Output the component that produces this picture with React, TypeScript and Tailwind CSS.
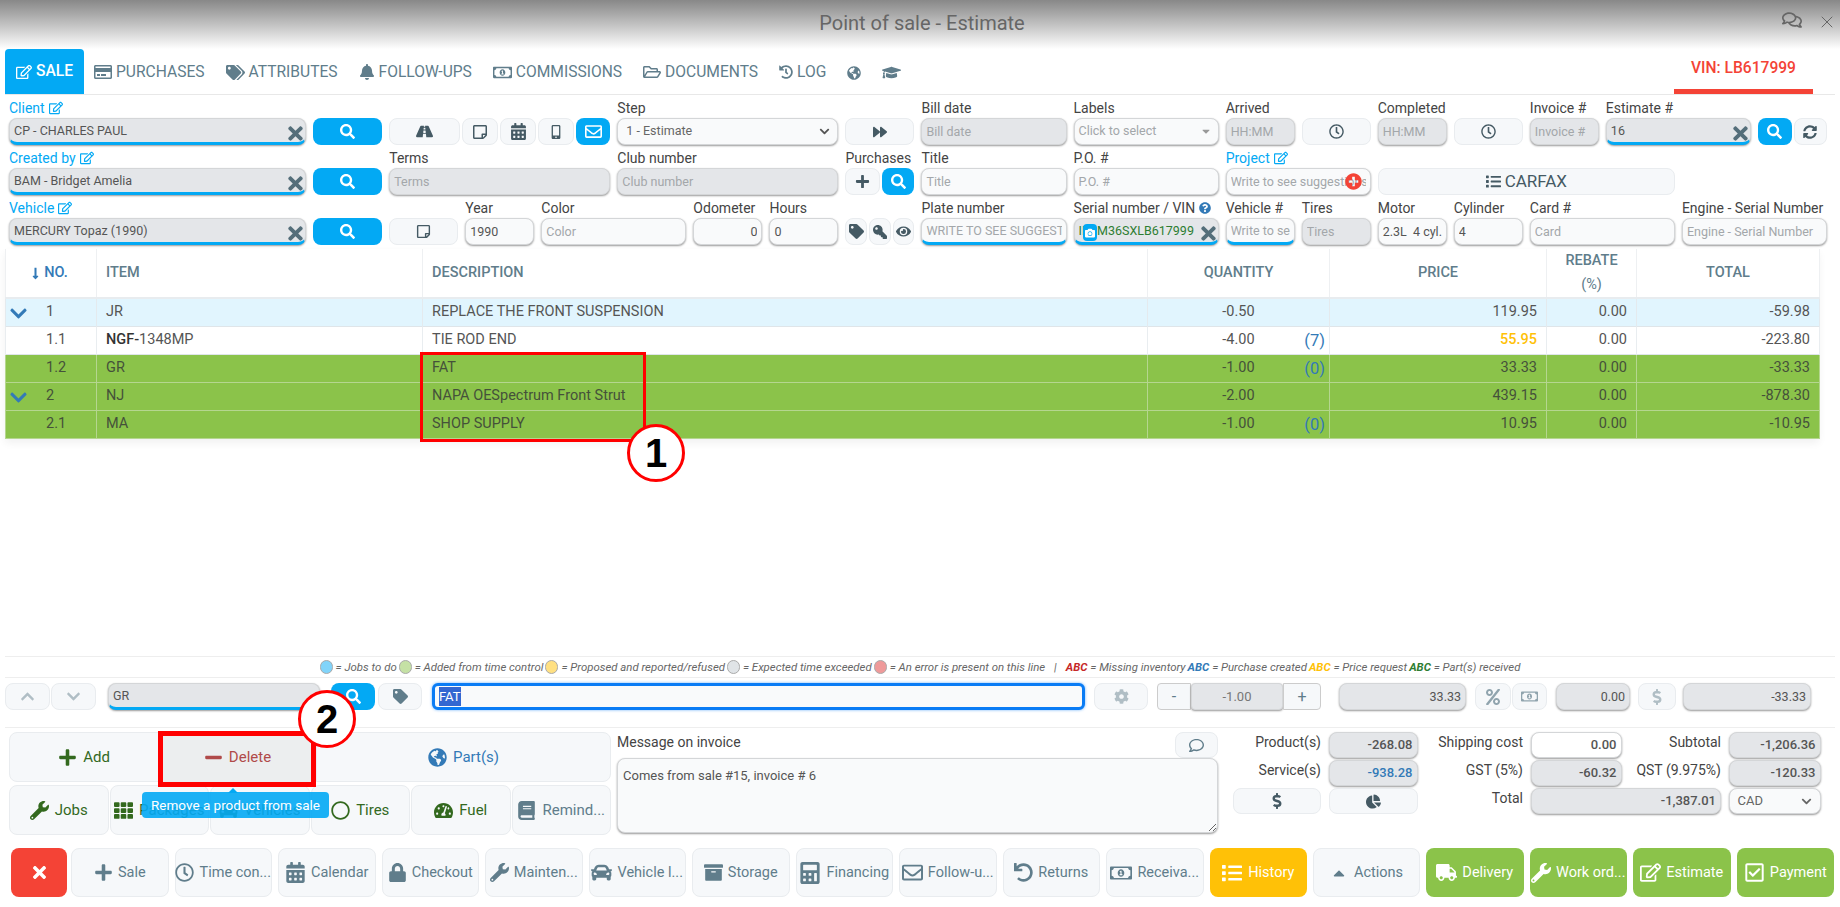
import type { ReactNode } from "react";
import {
  FaArchive, FaBell, FaBook, FaCalculator, FaCalendarAlt, FaCamera, FaCar, FaCaretUp, FaChartPie, FaChevronDown,
  FaChevronUp, FaCog, FaDollarSign, FaEye, FaForward, FaGlobeAmericas, FaGraduationCap, FaHistory,
  FaKey, FaList, FaLock, FaLongArrowAltDown, FaMinus, FaMobileAlt, FaPercent, FaPlus, FaPlusCircle, FaQuestionCircle,
  FaRegCheckSquare, FaRegCircle, FaRegClock, FaRegComment, FaRegComments, FaRegCreditCard, FaRegEdit, FaRegEnvelope,
  FaRegFolderOpen, FaRegMoneyBillAlt, FaRegStickyNote, FaRoad, FaSearch, FaSyncAlt, FaTachometerAlt, FaTag, FaTags,
  FaTh, FaTimes, FaTruck, FaUndo, FaWrench,
} from "react-icons/fa";
import { X } from "lucide-react";

const grayBtn = "flex items-center justify-center rounded-lg border border-[#e9ecef] bg-[#f6f8fa] text-[#455a64]";
const blueBtn = "flex items-center justify-center rounded-lg bg-[#03a9f4] text-white";

const Label = ({ children, link }: { children?: ReactNode; link?: boolean }) => (
  <div className={`flex h-[18px] items-center gap-1 whitespace-nowrap pb-[2px] text-[14px] ${link ? "text-[#03a9f4]" : "text-[#444]"}`}>
    {children}
    {link && <FaRegEdit className="text-[14px]" />}
  </div>
);

type InpProps = {
  value?: string;
  placeholder?: string;
  gray?: boolean;
  line?: boolean;
  clear?: boolean;
  right?: boolean;
  green?: boolean;
  className?: string;
};

const Inp = ({ value, placeholder, gray, line, clear, right, green, className = "h-[27px]" }: InpProps) => (
  <div className={`relative w-full ${className}`}>
    <input
      readOnly
      value={value ?? ""}
      placeholder={placeholder}
      className={`h-full w-full rounded-lg border border-[#d4d6d8] px-[4px] text-[12.5px] shadow-[0_1px_2px_rgba(0,0,0,0.4)] outline-none placeholder:text-[#a3a7aa] ${
        gray ? "bg-[#e4e6e9]" : "bg-[#f9fafb]"
      } ${line ? "border-b-[3px] border-b-[#03a9f4]" : ""} ${right ? "text-right" : ""} ${green ? "text-[#2e7d32]" : "text-[#555]"}`}
    />
    {clear && <FaTimes className="absolute right-0 top-[5px] text-[21px] text-[#546e7a]" />}
  </div>
);

const Field = ({ span, label, link, children }: { span: string; label?: ReactNode; link?: boolean; children: ReactNode }) => (
  <div className={`${span} min-w-0`}>
    <Label link={link}>{label}</Label>
    <div className="flex h-[27px] gap-[2px]">{children}</div>
  </div>
);

const SearchBtn = ({ className = "w-full" }: { className?: string }) => (
  <button className={`${blueBtn} h-[27px] text-[15px] ${className}`}>
    <FaSearch />
  </button>
);

const Select = ({ value, placeholder }: { value?: string; placeholder?: string }) => (
  <div className="flex h-[27px] w-full items-center justify-between rounded-lg border border-[#d4d6d8] bg-[#f9fafb] px-[4px] text-[12.5px] shadow-[0_1px_2px_rgba(0,0,0,0.4)]">
    <span className={value ? "pl-[4px] text-[#666]" : "text-[#a3a7aa]"}>{value ?? placeholder}</span>
    {value ? <FaChevronDown className="mr-[3px] text-[11px] text-[#555]" /> : <FaCaretUp className="mr-[2px] rotate-180 text-[12px] text-[#999]" />}
  </div>
);

const tabs = [
  { icon: <FaRegCreditCard className="text-[18px]" />, label: "PURCHASES" },
  { icon: <FaTags className="text-[19px]" />, label: "ATTRIBUTES" },
  { icon: <FaBell className="text-[16px]" />, label: "FOLLOW-UPS" },
  { icon: <FaRegMoneyBillAlt className="text-[19px]" />, label: "COMMISSIONS" },
  { icon: <FaRegFolderOpen className="text-[18px]" />, label: "DOCUMENTS" },
  { icon: <FaHistory className="text-[14px]" />, label: "LOG" },
  { icon: <FaGlobeAmericas className="text-[14px]" />, label: "" },
  { icon: <FaGraduationCap className="text-[19px]" />, label: "" },
];

const rows = [
  { no: "1", item: "JR", desc: "REPLACE THE FRONT SUSPENSION", qty: "-0.50", stock: "", price: "119.95", total: "-59.98", tone: "blue", arrow: true },
  { no: "1.1", item: "1348MP", bold: "NGF-", desc: "TIE ROD END", qty: "-4.00", stock: "(7)", price: "55.95", total: "-223.80", tone: "white", yellow: true },
  { no: "1.2", item: "GR", desc: "FAT", qty: "-1.00", stock: "(0)", price: "33.33", total: "-33.33", tone: "green" },
  { no: "2", item: "NJ", desc: "NAPA OESpectrum Front Strut", qty: "-2.00", stock: "", price: "439.15", total: "-878.30", tone: "green", arrow: true },
  { no: "2.1", item: "MA", desc: "SHOP SUPPLY", qty: "-1.00", stock: "(0)", price: "10.95", total: "-10.95", tone: "green" },
];

const Legend = ({ color, text }: { color: string; text: string }) => (
  <span className="flex items-center gap-[3px]">
    <span className={`h-[14px] w-[13px] rounded-full border border-[#aaa] ${color}`} />
    <span>= {text}</span>
  </span>
);

const SmallBtn = ({ icon, label, color, className }: { icon: ReactNode; label: string; color: string; className: string }) => (
  <button className={`${grayBtn} h-[50px] gap-[6px] text-[15px] ${color} ${className}`}>
    <span className="text-[19px]">{icon}</span>
    {label}
  </button>
);

const bottom = [
  { icon: <FaPlus />, label: "Sale" },
  { icon: <FaRegClock />, label: "Time con..." },
  { icon: <FaCalendarAlt className="text-[21px]" />, label: "Calendar" },
  { icon: <FaLock />, label: "Checkout" },
  { icon: <FaWrench />, label: "Mainten..." },
  { icon: <FaCar className="text-[21px]" />, label: "Vehicle l..." },
  { icon: <FaArchive />, label: "Storage" },
  { icon: <FaCalculator className="text-[22px]" />, label: "Financing" },
  { icon: <FaRegEnvelope className="text-[21px]" />, label: "Follow-u..." },
  { icon: <FaUndo />, label: "Returns" },
  { icon: <FaRegMoneyBillAlt className="text-[22px]" />, label: "Receiva..." },
];

const greenBottom = [
  { icon: <FaTruck className="text-[21px]" />, label: "Delivery" },
  { icon: <FaWrench className="text-[20px]" />, label: "Work ord..." },
  { icon: <FaRegEdit className="text-[21px]" />, label: "Estimate" },
  { icon: <FaRegCheckSquare className="text-[21px]" />, label: "Payment" },
];

const TotalLabel = ({ children }: { children: ReactNode }) => (
  <div className="flex h-[26px] items-start justify-end whitespace-nowrap text-[14px] text-[#444]">{children}</div>
);

const TotalVal = ({ value, blue, light, span }: { value: string; blue?: boolean; light?: boolean; span?: string }) => (
  <div
    className={`flex h-[26px] items-center justify-end rounded-lg border border-[#d4d6d8] px-[4px] text-[13px] font-medium shadow-[0_1px_2px_rgba(0,0,0,0.4)] ${
      light ? "bg-white" : "bg-[#e4e6e9]"
    } ${blue ? "text-[#337ab7]" : "text-[#555]"} ${span ?? ""}`}
  >
    {value}
  </div>
);

export default function App() {
  return (
    <div className="relative flex h-[907px] w-[1840px] flex-col overflow-hidden bg-white font-[Roboto,sans-serif]">
      {/* title bar */}
      <div className="relative flex h-[49px] shrink-0 items-center justify-center bg-gradient-to-b from-[#888] to-white pb-[4px] pl-[4px] text-[20px] text-[#666]">
        Point of sale - Estimate
        <FaRegComments className="absolute right-[38px] top-[10px] text-[20px] text-[#666]" />
        <X className="absolute right-[3px] top-[12px] h-[20px] w-[20px] text-[#666]" strokeWidth={1.2} />
      </div>

      {/* tabs */}
      <div className="ml-[5px] mr-[5px] flex h-[46px] shrink-0 items-stretch justify-between border-b border-[#e8e8e8] text-[15.6px] text-[#607d8b]">
        <div className="flex items-stretch">
          <div className="mr-[10px] flex w-[79px] items-center justify-center gap-[4px] rounded-t bg-[#03a9f4] pt-[1px] font-medium text-white">
            <FaRegEdit className="text-[16px]" />
            SALE
          </div>
          <div className="flex items-center gap-[21px] pt-[2px]">
            {tabs.map((t, i) => (
              <span key={i} className="flex items-center gap-[4px] whitespace-nowrap">
                {t.icon}
                {t.label}
              </span>
            ))}
          </div>
        </div>
        <div className="mr-[22px] flex w-[139px] items-center justify-center border-b-[5px] border-[#f44336] font-medium text-[#f44336]">
          VIN: LB617999
        </div>
      </div>

      {/* form */}
      <div className="mt-[5px] grid shrink-0 grid-cols-24 gap-x-[7px] gap-y-[5px] pl-[9px] pr-[13px]">
        <Field span="col-span-4" label="Client" link><Inp value="CP - CHARLES PAUL" gray line clear /></Field>
        <Field span="col-span-1"><SearchBtn /></Field>
        <Field span="col-span-3">
          <button className={`${grayBtn} w-[71px] shrink-0 text-[17px]`}><FaRoad /></button>
          <button className={`${grayBtn} flex-1`}><FaRegStickyNote className="text-[16px]" /></button>
          <button className={`${grayBtn} flex-1`}><FaCalendarAlt className="text-[17px]" /></button>
          <button className={`${grayBtn} flex-1`}><FaMobileAlt className="text-[14px]" /></button>
          <button className={`${blueBtn} flex-1`}><FaRegEnvelope className="text-[17px]" /></button>
        </Field>
        <Field span="col-span-3" label="Step"><Select value="1 - Estimate" /></Field>
        <Field span="col-span-1"><button className={`${grayBtn} w-full text-[14px]`}><FaForward /></button></Field>
        <Field span="col-span-2" label="Bill date"><Inp placeholder="Bill date" gray /></Field>
        <Field span="col-span-2" label="Labels"><Select placeholder="Click to select" /></Field>
        <Field span="col-span-1" label="Arrived"><Inp placeholder="HH:MM" gray /></Field>
        <Field span="col-span-1"><button className={`${grayBtn} w-full text-[15px]`}><FaRegClock /></button></Field>
        <Field span="col-span-1" label="Completed"><Inp placeholder="HH:MM" gray /></Field>
        <Field span="col-span-1"><button className={`${grayBtn} w-full text-[15px]`}><FaRegClock /></button></Field>
        <Field span="col-span-1" label="Invoice #"><Inp placeholder="Invoice #" gray /></Field>
        <Field span="col-span-2" label="Estimate #"><Inp value="16" gray line clear /></Field>
        <Field span="col-span-1">
          <SearchBtn className="w-[34px] shrink-0" />
          <button className={`${grayBtn} flex-1 text-[14px]`}><FaSyncAlt /></button>
        </Field>

        <Field span="col-span-4" label="Created by" link><Inp value="BAM - Bridget Amelia" gray line clear /></Field>
        <Field span="col-span-1"><SearchBtn /></Field>
        <Field span="col-span-3" label="Terms"><Inp placeholder="Terms" gray /></Field>
        <Field span="col-span-3" label="Club number"><Inp placeholder="Club number" gray /></Field>
        <Field span="col-span-1" label="Purchases">
          <button className={`${grayBtn} h-[27px] flex-1 text-[15px]`}><FaPlus /></button>
          <SearchBtn className="flex-1" />
        </Field>
        <Field span="col-span-2" label="Title"><Inp placeholder="Title" /></Field>
        <Field span="col-span-2" label="P.O. #"><Inp placeholder="P.O. #" /></Field>
        <Field span="col-span-2" label="Project" link>
          <div className="relative w-full">
            <Inp placeholder="Write to see suggestions" />
            <span className="absolute right-[9px] top-[5px] text-[17px] text-[#f44336]"><FaPlusCircle /></span>
          </div>
        </Field>
        <Field span="col-span-4">
          <button className={`${grayBtn} w-full gap-[4px] text-[17px]`}><FaList className="text-[15px]" />CARFAX</button>
        </Field>
        <div className="col-span-2" />

        <Field span="col-span-4" label="Vehicle" link><Inp value="MERCURY Topaz (1990)" gray line clear /></Field>
        <Field span="col-span-1"><SearchBtn /></Field>
        <Field span="col-span-1"><button className={`${grayBtn} w-full text-[15px]`}><FaRegStickyNote /></button></Field>
        <Field span="col-span-1" label="Year"><Inp value="1990" /></Field>
        <Field span="col-span-2" label="Color"><Inp placeholder="Color" /></Field>
        <Field span="col-span-1" label="Odometer"><Inp value="0" right /></Field>
        <Field span="col-span-1" label="Hours"><Inp value="0" /></Field>
        <Field span="col-span-1">
          <button className={`${grayBtn} flex-1 text-[15px]`}><FaTag /></button>
          <button className={`${grayBtn} flex-1 text-[14px]`}><FaKey className="-scale-x-100" /></button>
          <button className={`${grayBtn} flex-1 text-[15px]`}><FaEye /></button>
        </Field>
        <Field span="col-span-2" label="Plate number"><Inp placeholder="WRITE TO SEE SUGGESTIONS" line /></Field>
        <Field
          span="col-span-2"
          label={<>Serial number / VIN <FaQuestionCircle className="text-[12px] text-[#337ab7]" /></>}
        >
          <div className="relative w-full">
            <Inp value="IFCM36SXLB617999" gray green line clear />
            <span className="absolute left-[9px] top-[6px] flex h-[17px] w-[14px] items-center justify-center rounded-sm bg-[#03a9f4] text-[10px] text-white"><FaCamera /></span>
          </div>
        </Field>
        <Field span="col-span-1" label="Vehicle #"><Inp placeholder="Write to see" line /></Field>
        <Field span="col-span-1" label="Tires"><Inp placeholder="Tires" gray /></Field>
        <Field span="col-span-1" label="Motor"><Inp value="2.3L  4 cyl." /></Field>
        <Field span="col-span-1" label="Cylinder"><Inp value="4" /></Field>
        <Field span="col-span-2" label="Card #"><Inp placeholder="Card" /></Field>
        <Field span="col-span-2" label="Engine - Serial Number"><Inp placeholder="Engine - Serial Number" /></Field>
      </div>

      {/* lines */}
      <div className="ml-[5px] mt-[4px] w-[1814px] shrink-0 shadow-[0_4px_8px_rgba(0,0,0,0.06)]">
        <table className="w-full table-fixed border-collapse text-[14.5px] text-[#555]">
          <colgroup>
            <col className="w-[91px]" />
            <col className="w-[326px]" />
            <col className="w-[725px]" />
            <col className="w-[182px]" />
            <col className="w-[217px]" />
            <col className="w-[90px]" />
            <col className="w-[183px]" />
          </colgroup>
          <thead>
            <tr className="h-[48px] border-b-2 border-[#e8ecef] text-[#607d8b] [&>th]:border-x [&>th]:border-[#eef0f2]">
              <th className="pr-[5px] font-medium text-[#337ab7]">
                <span className="flex items-center justify-center gap-[2px]"><FaLongArrowAltDown className="text-[13px]" />NO.</span>
              </th>
              <th className="pl-[9px] text-left font-medium">ITEM</th>
              <th className="pl-[9px] text-left font-medium">DESCRIPTION</th>
              <th className="font-medium">QUANTITY</th>
              <th className="font-medium">PRICE</th>
              <th className="font-medium leading-[24px]">REBATE<br /><span className="font-normal">(%)</span></th>
              <th className="font-medium">TOTAL</th>
            </tr>
          </thead>
          <tbody>
            {rows.map((r) => (
              <tr
                key={r.no}
                className={`h-[28px] border-b [&>td]:border-x ${
                  r.tone === "blue"
                    ? "border-[#dfe5e9] bg-[#e1f5fe] [&>td]:border-[#e4eaee]"
                    : r.tone === "green"
                      ? "border-[#b5d68f] bg-[#8bc34a] text-[#45513a] [&>td]:border-[#b5d68f]"
                      : "border-[#dfe5e9] bg-white [&>td]:border-[#e9edf0]"
                }`}
              >
                <td className="relative pl-[40px]">
                  {r.arrow && <FaChevronDown className="absolute left-[3px] top-[5px] text-[19px] text-[#337ab7]" />}
                  {r.no}
                </td>
                <td className="pl-[9px]">{r.bold && <b className="font-medium text-[#333]">{r.bold}</b>}{r.item}</td>
                <td className="pl-[9px]">{r.desc}</td>
                <td className="relative text-center">
                  {r.qty}
                  {r.stock && <span className="absolute right-[4px] top-[2px] text-[16.5px] text-[#337ab7]">{r.stock}</span>}
                </td>
                <td className={`pr-[9px] text-right ${r.yellow ? "font-medium text-[#ffc107]" : ""}`}>{r.price}</td>
                <td className="pr-[9px] text-right">0.00</td>
                <td className="pr-[9px] text-right">{r.total}</td>
              </tr>
            ))}
          </tbody>
        </table>
      </div>

      <div className="flex-1" />

      {/* legend */}
      <div className="mx-[5px] flex h-[22px] shrink-0 items-center justify-center gap-[2px] border-y border-[#eee] pt-[1px] text-[11.4px] italic text-[#666]">
        <Legend color="bg-[#81d4fa]" text="Jobs to do" />
        <Legend color="bg-[#c5e1a5]" text="Added from time control" />
        <Legend color="bg-[#ffe082]" text="Proposed and reported/refused" />
        <Legend color="bg-[#e0e4e7]" text="Expected time exceeded" />
        <Legend color="bg-[#ef9a9a]" text="An error is present on this line" />
        <span className="mx-[7px]">|</span>
        <span><b className="text-[#c62828]">ABC</b> = Missing inventory</span>
        <span><b className="text-[#337ab7]">ABC</b> = Purchase created</span>
        <span><b className="text-[#ffc107]">ABC</b> = Price request</span>
        <span><b className="text-[#2e7d32]">ABC</b> = Part(s) received</span>
      </div>

      {/* line editor */}
      <div className="mx-[5px] mt-[5px] flex h-[45px] shrink-0 items-start border-b border-[#eee] text-[#90a4ae]">
        <button className={`${grayBtn} h-[27px] w-[45px] text-[15px] !text-[#b0bec5]`}><FaChevronUp /></button>
        <button className={`${grayBtn} ml-[1px] h-[27px] w-[45px] text-[15px] !text-[#b0bec5]`}><FaChevronDown /></button>
        <div className="ml-[12px] w-[212px]">
          <Inp value="GR" gray line />
        </div>
        <SearchBtn className="ml-[11px] w-[44px]" />
        <button className={`${grayBtn} ml-[3px] h-[27px] w-[44px] text-[15px] !text-[#607d8b]`}><FaTag /></button>
        <div className="ml-[10px] flex h-[27px] w-[653px] items-center rounded-md border-[3px] border-[#0a7cf5] bg-[#f9fafb] px-[4px] text-[13px] shadow-[0_0_3px_rgba(10,124,245,0.6)]">
          <span className="bg-[#3367d1] text-white">FAT</span>
        </div>
        <button className={`${grayBtn} ml-[9px] h-[27px] w-[54px] text-[15px] !text-[#b0bec5]`}><FaCog /></button>
        <button className="ml-[9px] h-[27px] w-[34px] rounded-l border border-[#ccc] bg-[#f6f8fa] text-[#607d8b]">-</button>
        <div className="flex h-[27px] w-[92px] items-center justify-center rounded-sm border border-[#d4d6d8] bg-[#e4e6e9] text-[13px] text-[#777] shadow-[0_1px_2px_rgba(0,0,0,0.4)]">-1.00</div>
        <button className="h-[27px] w-[38px] rounded-r border border-[#ccc] bg-[#f6f8fa] text-[#607d8b]">+</button>
        <div className="ml-[18px] w-[127px]"><Inp value="33.33" gray right /></div>
        <button className={`${grayBtn} ml-[9px] h-[27px] w-[36px] text-[16px] !text-[#90a4ae]`}><FaPercent /></button>
        <button className={`${grayBtn} ml-[1px] h-[27px] w-[35px] text-[17px] !text-[#90a4ae]`}><FaRegMoneyBillAlt /></button>
        <div className="ml-[9px] w-[74px]"><Inp value="0.00" gray right /></div>
        <button className={`${grayBtn} ml-[8px] h-[27px] w-[38px] text-[16px] !text-[#b0bec5]`}><FaDollarSign /></button>
        <div className="ml-[7px] w-[128px]"><Inp value="-33.33" gray right /></div>
      </div>

      {/* lower panel */}
      <div className="mt-[4px] flex h-[106px] shrink-0 pl-[9px] pr-[20px]">
        <div className="flex w-[602px] shrink-0 flex-col gap-[3px]">
          <div className="flex">
            <SmallBtn icon={<FaPlus />} label="Add" color="!text-[#33691e]" className="w-[150px] rounded-r-none" />
            <SmallBtn icon={<FaMinus />} label="Delete" color="!text-[#b04a4a] !bg-[#eceeef]" className="w-[157px] rounded-none" />
            <SmallBtn icon={<FaGlobeAmericas />} label="Part(s)" color="!text-[#337ab7]" className="flex-1 rounded-l-none" />
          </div>
          <div className="flex gap-[1px]">
            <SmallBtn icon={<FaWrench />} label="Jobs" color="!text-[#33691e]" className="flex-1" />
            <SmallBtn icon={<FaTh />} label="Packages" color="!text-[#33691e]" className="flex-1" />
            <SmallBtn icon={<FaCar />} label="Vehicles" color="!text-[#33691e]" className="flex-1" />
            <SmallBtn icon={<FaRegCircle />} label="Tires" color="!text-[#33691e]" className="flex-1" />
            <SmallBtn icon={<FaTachometerAlt />} label="Fuel" color="!text-[#33691e]" className="flex-1" />
            <SmallBtn icon={<FaBook />} label="Remind..." color="!text-[#607d8b]" className="flex-1" />
          </div>
        </div>

        <div className="ml-[6px] flex w-[601px] shrink-0 flex-col">
          <div className="flex h-[26px] items-start justify-between text-[14px] text-[#444]">
            Message on invoice
            <button className={`${grayBtn} h-[26px] w-[43px] text-[15px] !text-[#607d8b]`}><FaRegComment /></button>
          </div>
          <textarea
            readOnly
            value="Comes from sale #15, invoice # 6"
            className="h-[75px] w-full rounded-lg border border-[#d4d6d8] bg-[#f9fafb] px-[5px] py-[7px] text-[13px] text-[#555] shadow-[0_1px_2px_rgba(0,0,0,0.4)] outline-none"
          />
        </div>

        <div className="ml-[15px] grid flex-1 grid-cols-[88px_89px_98px_91px_92px_92px] content-start gap-x-[7.5px] gap-y-[2px] self-start">
          <TotalLabel>Product(s)</TotalLabel>
          <TotalVal value="-268.08" />
          <TotalLabel>Shipping cost</TotalLabel>
          <TotalVal value="0.00" light />
          <TotalLabel>Subtotal</TotalLabel>
          <TotalVal value="-1,206.36" />
          <TotalLabel>Service(s)</TotalLabel>
          <TotalVal value="-938.28" blue />
          <TotalLabel>GST (5%)</TotalLabel>
          <TotalVal value="-60.32" />
          <TotalLabel>QST (9.975%)</TotalLabel>
          <TotalVal value="-120.33" />
          <button className={`${grayBtn} h-[26px] text-[16px]`}><FaDollarSign /></button>
          <button className={`${grayBtn} h-[26px] text-[15px]`}><FaChartPie /></button>
          <TotalLabel>Total</TotalLabel>
          <TotalVal value="-1,387.01" span="col-span-2" />
          <div className="flex h-[26px] items-center justify-between rounded-lg border border-[#d4d6d8] bg-[#f9fafb] px-[8px] text-[13px] text-[#666] shadow-[0_1px_2px_rgba(0,0,0,0.4)]">
            CAD
            <FaChevronDown className="text-[11px]" />
          </div>
        </div>
      </div>

      {/* bottom bar */}
      <div className="mb-[10px] mt-[10px] flex h-[49px] shrink-0 gap-[6px] pl-[11px] text-[14.5px]">
        <button className="mr-[-2px] flex w-[56px] shrink-0 items-center justify-center rounded-lg bg-[#f44336] text-[19px] text-white"><FaTimes /></button>
        {bottom.map((b) => (
          <button key={b.label} className={`${grayBtn} w-[97.5px] shrink-0 gap-[5px] whitespace-nowrap !text-[#607d8b]`}>
            <span className="text-[19px]">{b.icon}</span>
            {b.label}
          </button>
        ))}
        <button className="flex w-[97.5px] shrink-0 items-center justify-center gap-[6px] rounded-lg bg-[#ffc107] text-white">
          <FaList className="text-[20px]" />
          History
        </button>
        <button className={`${grayBtn} w-[107px] shrink-0 gap-[6px] !text-[#607d8b]`}>
          <FaCaretUp className="text-[18px]" />
          Actions
        </button>
        {greenBottom.map((b) => (
          <button key={b.label} className="flex w-[97.5px] shrink-0 items-center justify-center gap-[5px] whitespace-nowrap rounded-lg bg-[#8bc34a] text-white">
            {b.icon}
            {b.label}
          </button>
        ))}
      </div>

      {/* tooltip */}
      <div className="absolute left-[142px] top-[792px] flex h-[26px] w-[187px] items-center justify-center rounded bg-[#03a9f4]/90 text-[13.5px] text-white">
        Remove a product from sale
        <span className="absolute left-[86px] top-[-4px] h-0 w-0 border-x-[5px] border-b-[5px] border-x-transparent border-b-[#03a9f4]" />
      </div>

      {/* annotations on the screenshot */}
      <div className="absolute left-[420px] top-[352px] h-[90px] w-[226px] border-[3px] border-[#ff0000]" />
      <div className="absolute left-[158px] top-[731px] h-[56px] w-[158px] border-[5px] border-[#ff0000]" />
      <div className="absolute left-[627px] top-[424px] flex h-[58px] w-[58px] items-center justify-center rounded-full border-[3px] border-[#ff0000] bg-white font-['Liberation_Sans',sans-serif] text-[40px] font-bold text-black">1</div>
      <div className="absolute left-[298px] top-[690px] flex h-[58px] w-[58px] items-center justify-center rounded-full border-[3px] border-[#ff0000] bg-white font-['Liberation_Sans',sans-serif] text-[40px] font-bold text-black">2</div>
    </div>
  );
}
